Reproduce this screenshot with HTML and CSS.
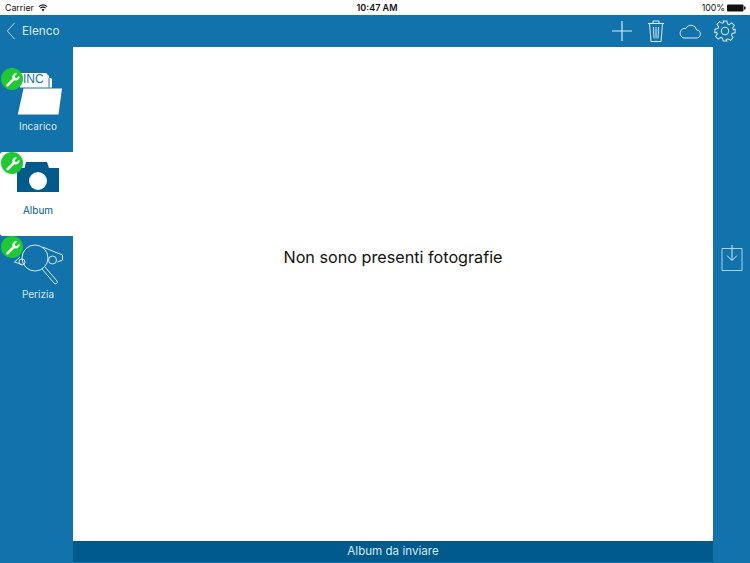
FILE: index.html
```html
<!DOCTYPE html>
<html lang="it">
<head>
<meta charset="utf-8">
<title>Album</title>
<link rel="stylesheet" href="styles.css">
</head>
<body>
<div class="app">
  <header class="status">
    <div class="status-left">
      <span>Carrier</span>
      <svg class="wifi" viewBox="0 0 12 9" width="10" height="8"><path d="M6 8.600 4.200 6.400a2.800 2.800 0 0 1 3.600 0Z" fill="#111"/><path d="M3.200 5.200a4.500 4.500 0 0 1 5.600 0l.8-1a5.800 5.800 0 0 0-7.200 0Z" fill="#111"/><path d="M1.600 3.300a7 7 0 0 1 8.800 0l.9-1a8.400 8.400 0 0 0-10.600 0Z" fill="#111"/></svg>
    </div>
    <div class="status-time">10:47 AM</div>
    <div class="status-right">
      <span>100%</span>
      <svg class="battery" viewBox="0 0 19 8" width="19" height="8"><rect x="0" y="0.5" width="16.500" height="7" rx="1" fill="#111"/><rect x="17" y="2.500" width="1.500" height="3" fill="#111"/></svg>
    </div>
  </header>
  <nav class="navbar">
    <div class="back">
      <svg class="back-icon" viewBox="0 0 10 20" width="10" height="18"><path d="M9 1 1 10l8 9" fill="none" stroke="#b9dcf0" stroke-width="1.100"/></svg>
      <span>Elenco</span>
    </div>
    <div class="actions">
      <svg viewBox="0 0 22 22" width="22" height="22"><path d="M11 1v20M1 11h20" stroke="#d5eaf6" stroke-width="1.200" fill="none"/></svg>
      <svg viewBox="0 0 18 24" width="18" height="24"><g fill="none" stroke="#d5eaf6" stroke-width="1"><path d="M1 4.500h16M6 4.500V2h6v2.500M2.500 4.500 4 22.500h10l1.500-18"/><path d="M6.500 8l.5 11.500M9 8v11.500M11.500 8 11 19.500"/></g></svg>
      <svg viewBox="0 0 22 15" width="22" height="15"><path d="M5 14h12a4 4 0 0 0 .6-8A5.600 5.600 0 0 0 7 4.400 4.800 4.800 0 0 0 5 14Z" fill="none" stroke="#d5eaf6" stroke-width="1"/></svg>
      <svg viewBox="0 0 24 24" width="22" height="22"><g fill="none" stroke="#d5eaf6" stroke-width="1.100"><circle cx="12" cy="12" r="4"/><path d="M10 1h4l.7 3.200 1.900.8 2.800-1.800 2.800 2.800-1.800 2.800.8 1.900L23 10v4l-3.200.7-.8 1.900 1.800 2.800-2.800 2.800-2.800-1.800-1.900.8L14 23h-4l-.7-3.200-1.900-.8-2.800 1.800-2.800-2.800 1.800-2.800-.8-1.900L1 14v-4l3.200-.7.8-1.900L3.200 4.600 6 1.800l2.800 1.800 1.900-.8Z"/></g></svg>
    </div>
  </nav>
  <div class="body">
    <aside class="sidebar">
      <div class="tab">
        <svg class="badge" viewBox="0 0 22 22" width="22" height="22"><circle cx="11" cy="11" r="11" fill="#1fc932"/><path d="M5.500 16.500l6-6a3.800 3.800 0 0 1 4.700-5l-2.400 2.400.3 1.800 1.800.3 2.400-2.400a3.800 3.800 0 0 1-5 4.700l-6 6a1.300 1.300 0 0 1-1.800-1.800Z" fill="#fff"/></svg>
        <svg class="tab-icon folder" viewBox="0 0 46 49" width="46" height="49">
          <path d="M3 4h26l3 3v2h2l1 1v8.500H3Z" fill="#fff"/>
          <path d="M32 9v9.500" stroke="#1272ab" stroke-width="1" fill="none"/>
          <path d="M6.500 19.500H45L41.500 45.500H.8Z" fill="#fff"/>
          <text x="6" y="14" class="inc">INC</text>
        </svg>
        <span class="tab-label">Incarico</span>
      </div>
      <div class="tab tab-active">
        <svg class="badge" viewBox="0 0 22 22" width="22" height="22"><circle cx="11" cy="11" r="11" fill="#1fc932"/><path d="M5.500 16.500l6-6a3.800 3.800 0 0 1 4.700-5l-2.400 2.400.3 1.800 1.800.3 2.400-2.400a3.800 3.800 0 0 1-5 4.700l-6 6a1.300 1.300 0 0 1-1.800-1.800Z" fill="#fff"/></svg>
        <svg class="tab-icon" viewBox="0 0 46 49" width="46" height="49">
          <path d="M2 15H9.500L11 9H32L34 15H44V39H2Z" fill="#005a8c"/>
          <circle cx="23" cy="28" r="9" fill="#fff"/>
        </svg>
        <span class="tab-label">Album</span>
      </div>
      <div class="tab">
        <svg class="badge" viewBox="0 0 22 22" width="22" height="22"><circle cx="11" cy="11" r="11" fill="#1fc932"/><path d="M5.500 16.500l6-6a3.800 3.800 0 0 1 4.700-5l-2.400 2.400.3 1.800 1.800.3 2.400-2.400a3.800 3.800 0 0 1-5 4.700l-6 6a1.300 1.300 0 0 1-1.800-1.800Z" fill="#fff"/></svg>
        <svg class="tab-icon perizia" viewBox="0 0 50 49" width="50" height="49">
          <g fill="none" stroke="#d5eaf6" stroke-width="1">
            <circle cx="21" cy="21" r="13"/>
            <path d="M28.500 10 48.500 18v5l-5 2"/>
            <circle cx="38.500" cy="23" r="4"/>
            <path d="M6 20 .5 25 8 27.500"/>
            <circle cx="8" cy="25" r="3"/>
            <path d="M31 30 43 44a1.600 1.600 0 0 1-3 2L28 32"/>
          </g>
        </svg>
        <span class="tab-label">Perizia</span>
      </div>
    </aside>
    <div class="center">
      <main class="content">
        <p class="empty">Non sono presenti fotografie</p>
      </main>
      <div class="footer">Album da inviare</div>
    </div>
    <aside class="rail">
      <svg viewBox="0 0 22 27" width="22" height="27"><path d="M1 4.500h20v22H1Z" fill="none" stroke="#a9d3ec" stroke-width="1"/><path d="M11 1v15M6 11.500l5 5 5-5" fill="none" stroke="#d5eaf6" stroke-width="1"/></svg>
    </aside>
  </div>
</div>
</body>
</html>
```
FILE: styles.css
```css
* { box-sizing: border-box; }
html, body { margin: 0; padding: 0; }
body { width: 750px; height: 563px; overflow: hidden; background: #1272ab; font-family: Inter, "Liberation Sans", sans-serif; }
svg { display: block; }
.app { width: 750px; height: 563px; display: flex; flex-direction: column; }

.status { height: 15px; flex: none; background: #fff; color: #111; display: grid; grid-template-columns: 1fr auto 1fr; align-items: center; padding: 0 4px 0 5px; font-size: 8.800px; }
.status-left { display: flex; align-items: center; gap: 4px; }
.status-time { font-weight: 600; font-size: 9px; padding-left: 3px; }
.status-right { display: flex; align-items: center; justify-content: flex-end; gap: 2px; }

.navbar { height: 32px; flex: none; display: flex; align-items: center; justify-content: space-between; color: #d5eaf6; padding: 0 14px 0 6px; }
.back { display: flex; align-items: center; gap: 6px; font-size: 11.800px; }
.actions { display: flex; align-items: center; gap: 14px; }
.actions svg:last-child { margin-left: -1px; }

.body { flex: 1; display: flex; min-height: 0; }
.sidebar { width: 73px; flex: none; padding-top: 21px; }
.tab { position: relative; height: 84px; padding: 1px 0 0 3px; display: flex; flex-direction: column; align-items: center; color: #d5eaf6; font-size: 10px; }
.tab-active { background: #fff; color: #005a8c; border-radius: 3px 0 0 3px; }
.tab-icon { flex: none; }
.folder { margin-left: 4px; }
.perizia { margin-left: 2px; }
.tab-label { margin-top: 1px; line-height: 14px; }
.badge { position: absolute; left: 1px; top: 0; z-index: 1; }
.inc { font-family: "Liberation Sans", sans-serif; font-size: 12px; fill: #1272ab; }

.center { width: 640px; flex: none; display: flex; flex-direction: column; }
.content { flex: 1; background: #fff; display: flex; justify-content: center; padding-top: 198px; }
.empty { margin: 0; font-size: 16.200px; line-height: 24px; color: #111; }
.footer { height: 21px; flex: none; margin-bottom: 1px; background: #005a8c; color: #d5eaf6; font-size: 11.600px; text-align: center; line-height: 21px; }

.rail { flex: 1; display: flex; justify-content: center; padding-top: 197px; }
```
